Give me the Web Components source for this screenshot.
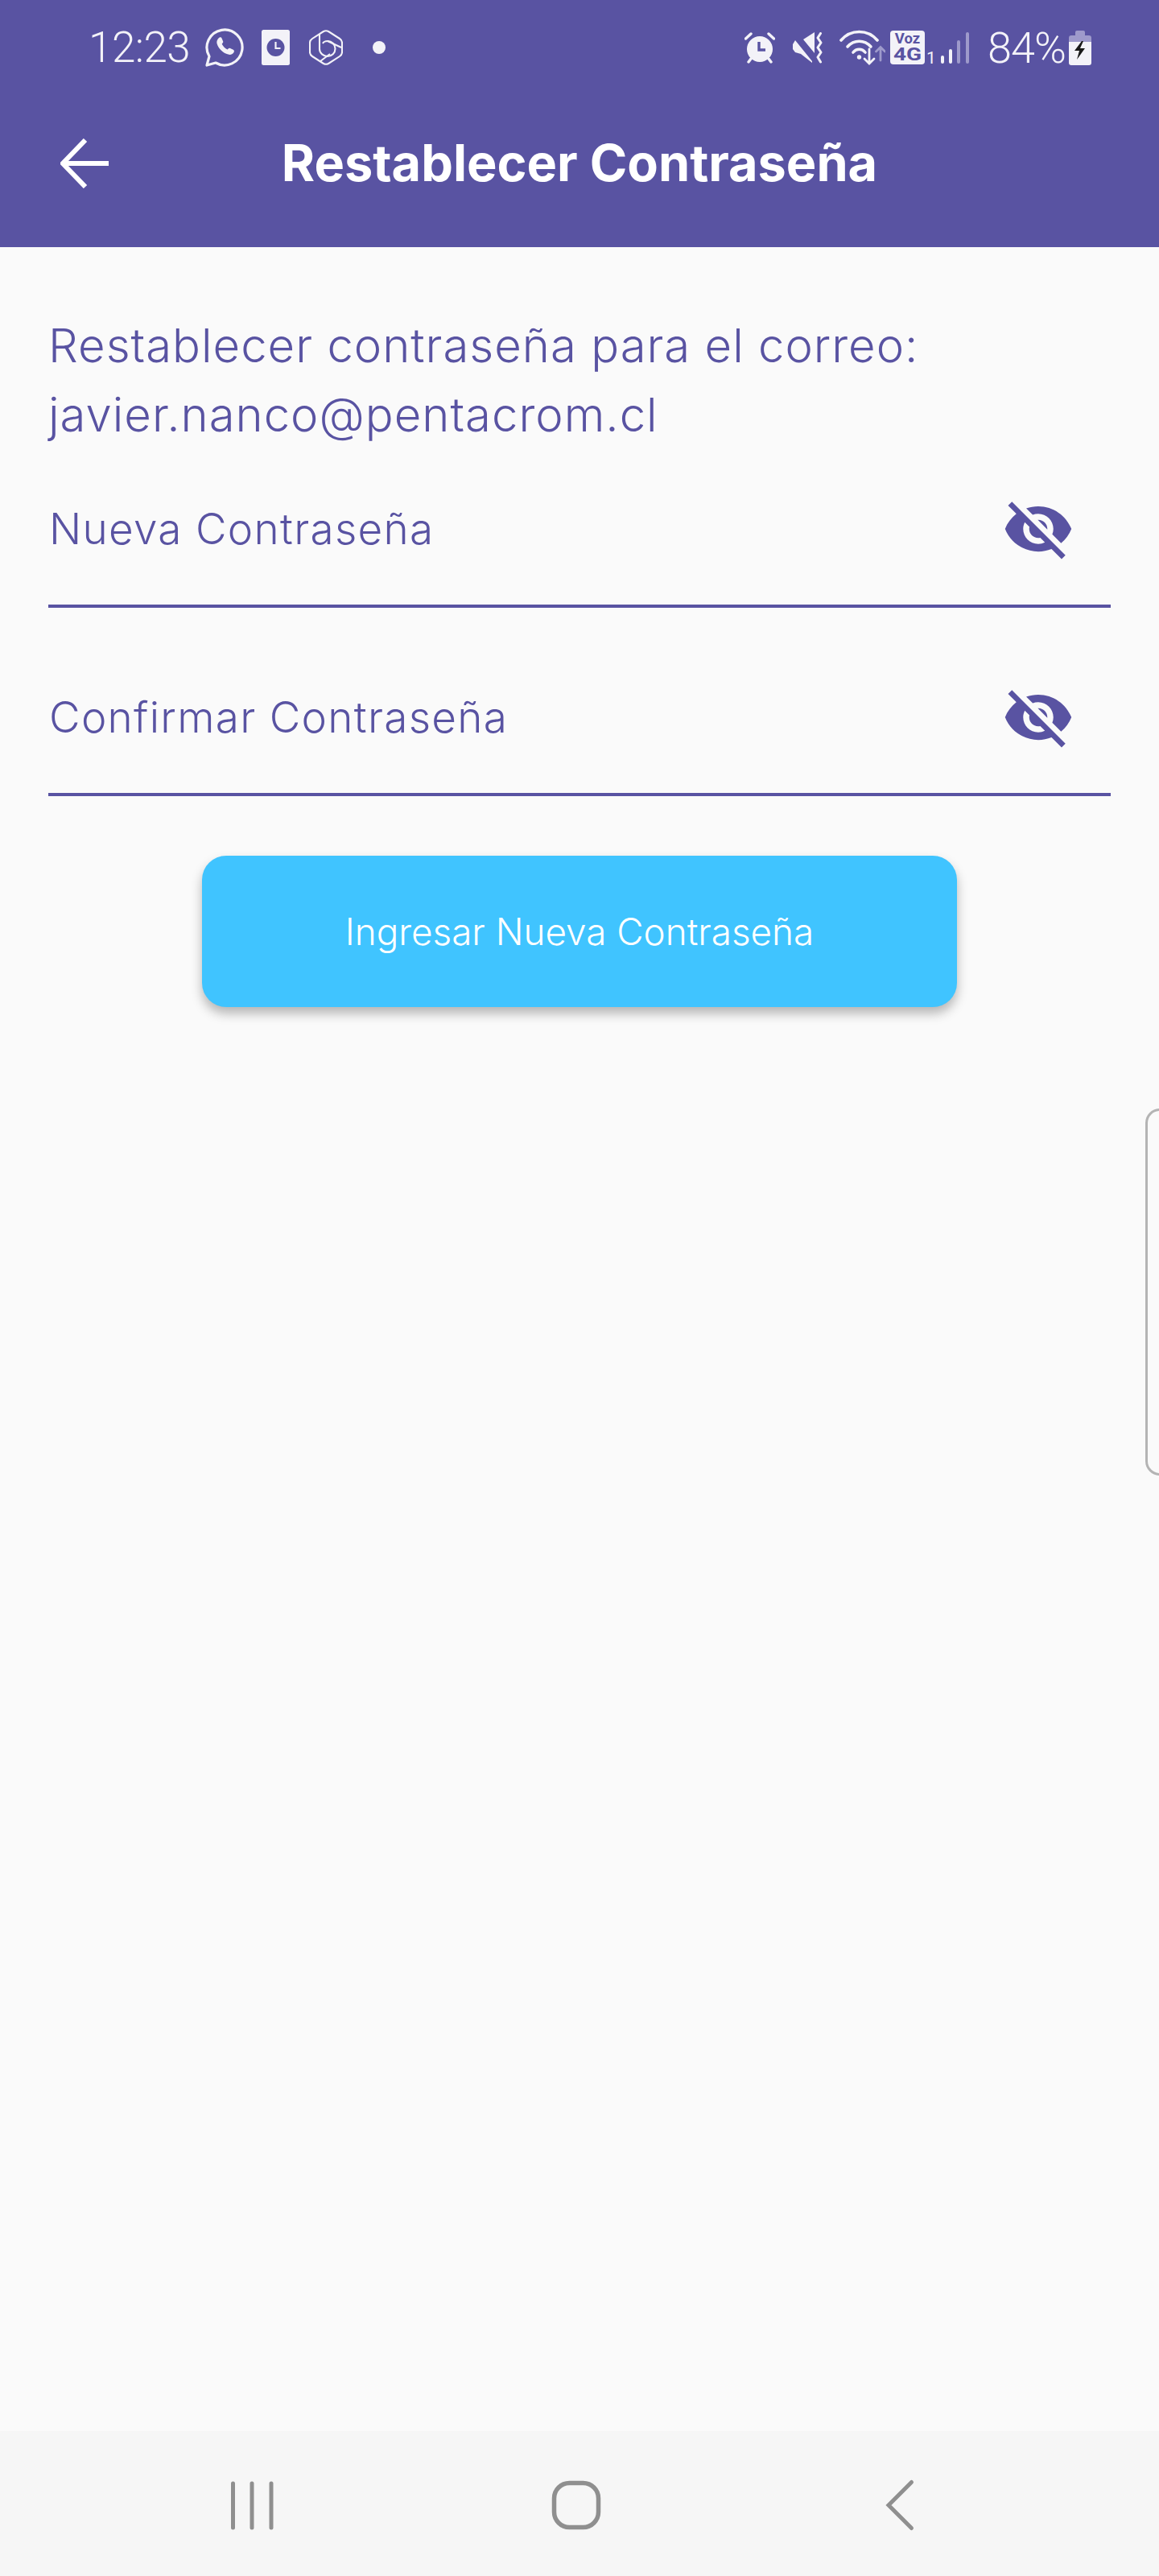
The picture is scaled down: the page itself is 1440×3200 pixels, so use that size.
<!DOCTYPE html>
<html lang="es">
<head>
<meta charset="utf-8">
<title>Restablecer Contraseña</title>
<style>
  html, body { margin: 0; padding: 0; background: #fafafa; }
  body { font-family: "Inter", "Noto Sans", sans-serif; }
</style>
</head>
<body>
<app-screen>
  <status-bar slot="top"></status-bar>
  <app-bar slot="top">Restablecer Contraseña</app-bar>
  <reset-note>Restablecer contraseña para el correo:<br>javier.nanco@pentacrom.cl</reset-note>
  <password-field>Nueva Contraseña</password-field>
  <password-field>Confirmar Contraseña</password-field>
  <primary-button>Ingresar Nueva Contraseña</primary-button>
  <nav-bar slot="bottom"></nav-bar>
</app-screen>

<script>
const define = (name, html) => {
  customElements.define(name, class extends HTMLElement {
    constructor() {
      super();
      this.attachShadow({ mode: 'open' }).innerHTML = html;
    }
  });
};

define('app-screen', `
  <style>
    :host { display: flex; flex-direction: column; width: 1440px; height: 3200px; position: relative; overflow: hidden; background: #fafafa; }
    main { flex: 1; display: flex; flex-direction: column; padding: 0 60px; }
    .handle { position: absolute; left: 1423px; top: 1377px; width: 30px; height: 450px; border: 3px solid #b4b4b4; border-radius: 18px; }
  </style>
  <slot name="top"></slot>
  <main><slot></slot></main>
  <slot name="bottom"></slot>
  <div class="handle"></div>
`);

define('status-bar', `
  <style>
    :host { display: flex; align-items: center; height: 118px; padding: 0 84px 0 110px; background: #5953a2; color: #f3f2f8; font-family: "Roboto", sans-serif; font-weight: 300; font-size: 53px; box-sizing: border-box; }
    svg { display: block; flex: none; }
    .time { width: 145px; letter-spacing: -.5px; }
    .pct { margin-left: 21px; width: 101px; font-size: 54px; letter-spacing: -1px; }
    .right { margin-left: auto; display: flex; align-items: center; }
    .sim { display: flex; align-items: flex-end; width: 60px; margin-left: 6px; }
    .badge { display: flex; flex-direction: column; align-items: center; justify-content: space-between; width: 43px; height: 42px; padding: 2px 0 3px; box-sizing: border-box; border-radius: 4px; background: #f3f2f8; color: #5953a2; font-weight: 700; }
    .voz { font-size: 18.500px; line-height: 16px; }
    .net { font-size: 21.500px; line-height: 18px; transform: scaleX(1.300); }
    .slot-no { margin-left: 2px; font-size: 21px; font-weight: 400; line-height: 16px; }
  </style>
  <span class="time">12:23</span>
  <!-- whatsapp -->
  <svg width="48" height="48" viewBox="0 0 48 48" fill="none" stroke="#f3f2f8" stroke-width="3.2">
    <path d="M2 46l3-11A22 22 0 1 1 13 43z" stroke-linejoin="round"/>
    <path fill="#f3f2f8" stroke="none" d="M17 12c1-1 3-1 3.500 .5l1.700 4c.4 1-.6 2-1.500 3.200 1.600 3 3.800 5.200 6.800 6.800 1.200-1 2-2.200 3-1.700l4.300 2c1.500 .7 1.400 2.500 .4 3.800-1.500 2-4 2.800-6.700 2-6.500-1.800-12-7-14-13.600-.6-2.600 .5-5.300 2.500-7z"/>
  </svg>
  <!-- clock card -->
  <svg style="margin-left:22px" width="35" height="44" viewBox="0 0 35 44">
    <rect width="35" height="44" rx="2.500" fill="#f3f2f8"/>
    <circle cx="17.500" cy="22" r="11" fill="#5953a2"/>
    <path d="M17.500 15v8h6" fill="none" stroke="#f3f2f8" stroke-width="2.200"/>
  </svg>
  <!-- bing chat -->
  <svg style="margin-left:24px" width="42" height="44" viewBox="0 0 42 44" fill="none" stroke="#f3f2f8" stroke-width="2.100" stroke-linejoin="round">
    <path d="M18 2 Q21 0.500 24 2 L38 11 Q41 13 41 16 V28 Q41 31 38 33 L24 42 Q21 43.500 18 42 L4 33 Q1 31 1 28 V16 Q1 13 4 11z"/>
    <path d="M13 5V24c0 5 5 9 10 9a9.500 9.500 0 0 0 0-19c-3 0-5 1-6 3"/>
    <path d="M23 14 40 22M26 30l-12 9"/>
  </svg>
  <svg style="margin-left:37px" width="16" height="16" viewBox="0 0 16 16"><circle cx="8" cy="8" r="8" fill="#f3f2f8"/></svg>
  <div class="right">
    <!-- alarm -->
    <svg width="38" height="39" viewBox="0 0 38 39">
      <circle cx="19" cy="21" r="16" fill="#f3f2f8"/>
      <path d="M1.500 8 8 2M36.500 8 30 2M5 37l3-4M33 37l-3-4" stroke="#f3f2f8" stroke-width="3.400" stroke-linecap="round"/>
      <path d="M18 12v10h8" fill="none" stroke="#5953a2" stroke-width="3.400"/>
    </svg>
    <!-- muted vibrate -->
    <svg style="margin-left:22px" width="39" height="39" viewBox="0 0 39 39">
      <path d="M0 15 3 10 24 36v2L10 27 3 25 0 21zM13 9 27 0V26z" fill="#f3f2f8"/>
      <path d="M34.500 1.500 31 7l4 6-4 6 4 6-4 6 3.500 6" fill="none" stroke="#f3f2f8" stroke-width="3" stroke-linecap="round" stroke-linejoin="round"/>
    </svg>
    <!-- wifi with arrows -->
    <svg style="margin-left:19px" width="57" height="45" viewBox="0 0 57 45" fill="none" stroke="#f3f2f8" stroke-width="3.600" stroke-linecap="round">
      <path d="M2 13C14 -1 35 -1 47 13"/>
      <path d="M10 21C18 12 31 12 39 21"/>
      <path d="M17 28C21 23 28 23 32 28"/>
      <circle cx="24.500" cy="34" r="2.700" fill="#f3f2f8" stroke="none"/>
      <path stroke-width="2.800" d="M37 24V42M31 36l6 6 6-6"/>
      <path stroke="#9e9acb" stroke-width="2.800" d="M51 38V22M45.500 27l5.500-5.500 5.500 5.500"/>
    </svg>
    <!-- voz 4g -->
    <div class="sim">
      <div class="badge"><span class="voz">Voz</span><span class="net">4G</span></div>
      <span class="slot-no">1</span>
    </div>
    <!-- signal -->
    <svg style="margin-left:2px" width="38" height="39" viewBox="0 0 38 39" stroke-width="4" stroke-linecap="round" fill="none">
      <path d="M3 31v6M13 23v14" stroke="#f3f2f8"/>
      <path d="M23 12v25M34 2v35" stroke="#9e9acb"/>
    </svg>
    <span class="pct">84%</span>
    <!-- battery charging -->
    <svg width="28" height="43" viewBox="0 0 28 43">
      <path d="M8 2q0-2 2-2h8q2 0 2 2v4h5q3 0 3 3v5H0V9q0-3 3-3h5z" fill="#9e9acb"/>
      <path d="M0 14h28v26q0 3-3 3H3q-3 0-3-3z" fill="#f3f2f8"/>
      <path d="M16 13 7 25h6l-3 11 10-14h-6l4-9z" fill="#1a1a1a"/>
    </svg>
  </div>
`);

define('app-bar', `
  <style>
    :host { display: flex; align-items: center; justify-content: center; position: relative; height: 189px; background: #5953a2; color: #fff; font-size: 63px; font-weight: 700; }
    svg { position: absolute; left: 75px; top: 54px; }
    span { padding-bottom: 22px; }
  </style>
  <svg width="61" height="62" viewBox="0 0 61 62" fill="none" stroke="#fff" stroke-width="6"><path d="M60 31H3M31 2 3 31 31 60"/></svg>
  <span><slot></slot></span>
`);

define('reset-note', `
  <style>
    :host { display: block; padding: 79px 0 5px; color: #5953a2; font-size: 58px; font-weight: 350; letter-spacing: 1px; line-height: 86px; }
  </style>
  <slot></slot>
`);

define('password-field', `
  <style>
    :host { display: flex; align-items: center; justify-content: space-between; height: 188px; padding: 0 45px 0 1px; margin-bottom: 42px; color: #5953a2; font-size: 53px; font-weight: 350; letter-spacing: 1.300px; border-bottom: 4px solid #5953a2; }
    svg { display: block; }
  </style>
  <slot></slot>
  <svg width="90" height="90" viewBox="0 0 24 24" fill="#5953a2"><path d="M12 7c2.760 0 5 2.240 5 5 0 .650-.130 1.260-.360 1.830l2.920 2.920c1.510-1.260 2.700-2.890 3.430-4.750-1.730-4.390-6-7.500-11-7.500-1.400 0-2.740.250-3.980.700l2.160 2.160C10.740 7.130 11.350 7 12 7zM2 4.270l2.280 2.280.460.460C3.080 8.300 1.780 10.020 1 12c1.730 4.390 6 7.500 11 7.500 1.550 0 3.030-.300 4.380-.840l.420.420L19.730 22 21 20.730 3.270 3 2 4.270zM7.530 9.800l1.550 1.550c-.050.210-.080.430-.080.650 0 1.660 1.340 3 3 3 .220 0 .440-.030.650-.080l1.550 1.550c-.670.330-1.410.530-2.200.530-2.760 0-5-2.240-5-5 0-.790.200-1.530.530-2.200zm4.310-.780l3.150 3.150.020-.160c0-1.660-1.340-3-3-3l-.170.010z"/></svg>
`);

define('primary-button', `
  <style>
    :host { display: flex; align-items: center; justify-content: center; align-self: center; width: 938px; height: 188px; margin-top: 32px; background: #40c4ff; color: #fff; font-size: 45.800px; font-weight: 300; border-radius: 30px; box-shadow: 0 8px 14px rgba(0,0,0,.28); }
  </style>
  <slot></slot>
`);

define('nav-bar', `
  <style>
    :host { display: block; height: 180px; background: #f6f6f6; }
    svg { display: block; }
  </style>
  <svg width="1440" height="180" viewBox="0 0 1440 180" fill="none" stroke="#8f8f8f" stroke-width="5" stroke-linecap="round">
    <path d="M289.500 65v55M313 65v55M337 65v55"/>
    <rect x="688.500" y="64.500" width="55" height="55" rx="19" stroke-width="5.500"/>
    <path d="M1132.500 63.500 1104 92l28.500 28.500"/>
  </svg>
`);
</script>
</body>
</html>
